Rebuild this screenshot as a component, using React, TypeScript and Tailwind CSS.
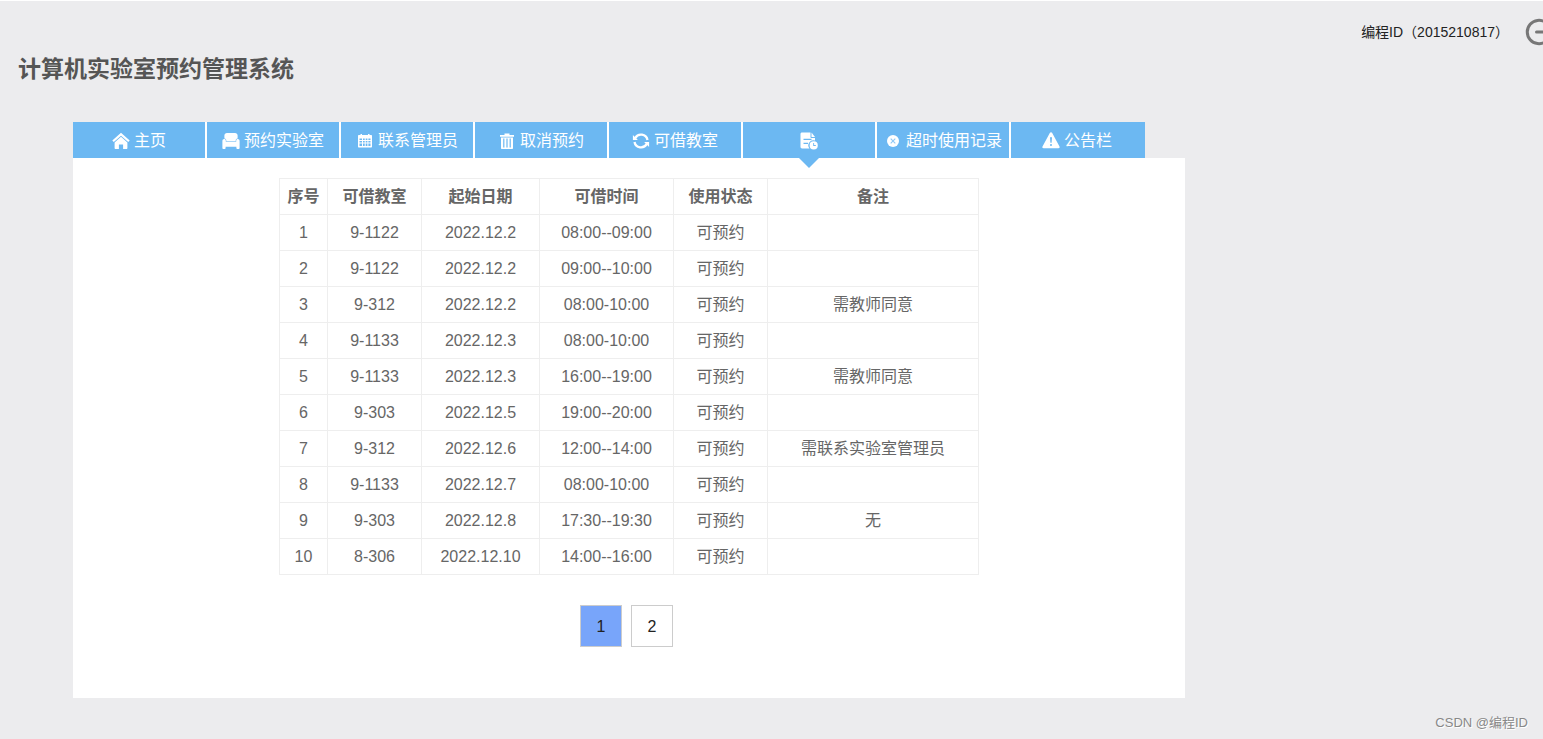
import type { ReactNode } from 'react'
import clsx from 'clsx'

interface NavItem {
  key:     string
  label:   string
  icon:    ReactNode
  active?: boolean
}

interface Booking {
  room:   string
  date:   string
  time:   string
  remark: string
}

const svgProps = {
  width: 18,
  height: 18,
  viewBox: '0 0 18 18',
  fill: 'currentColor',
  'aria-hidden': true,
  className: 'shrink-0',
} as const

function HomeIcon() {
  return (
    <svg {...svgProps}>
      <path d="M9 .7 .3 8.4l1.5 1.7L9 3.8l7.2 6.3 1.5-1.7z" />
      <path d="M9 4.800 2.6 10.4V16c0 .6.4 1 1 1h3.3v-4.6h4.2V17h3.3c.6 0 1-.4 1-1v-5.600z" />
    </svg>
  )
}

function SofaIcon() {
  return (
    <svg {...svgProps}>
      <path d="M5 1h8c1.500 0 2.600 1 2.600 2.300v3.200c-1.200.1-1.900.9-1.900 2v.8H4.300v-.8c0-1.100-.7-1.900-1.900-2V3.300C2.400 2 3.500 1 5 1z" />
      <path d="M2.300 7c1 0 1.500.6 1.500 1.500v1.300h10.400V8.500c0-.9.500-1.500 1.500-1.500 1.200 0 1.900.8 1.900 1.900V16c0 .6-.3.900-.8.900h-1.600c-.5 0-.8-.3-.8-.9v-1.200H3.600V16c0 .6-.3.900-.8.900H1.200c-.5 0-.8-.3-.8-.9V8.900C.4 7.800 1.100 7 2.300 7z" />
    </svg>
  )
}

function CalendarIcon() {
  return (
    <svg {...svgProps}>
      <path
        fillRule="evenodd"
        d="M4.500 2h1.500v1h6V2h1.500v1h1.500c.6 0 1 .4 1 1v10.500c0 .6-.4 1-1 1H3c-.6 0-1-.4-1-1V4c0-.6.4-1 1-1h1.500zM3.500 6.500V8H6V6.500zm3.500 0V8h1.700V6.500zm2.700 0V8h1.700V6.500zm2.700 0V8h2.100V6.500zM3.500 9v1.500H6V9zM7 9v1.500h1.700V9zm2.700 0v1.500h1.700V9zm2.700 0v1.500h2.100V9zm-8.900 2.500V14H6v-2.500zm3.500 0V14h1.700v-2.500zm2.700 0V14h1.700v-2.500zm2.700 0V14h2.100v-2.500z"
      />
    </svg>
  )
}

function TrashIcon() {
  return (
    <svg {...svgProps}>
      <path
        fillRule="evenodd"
        d="M6.500 1.500h5V3H16v1.700H2V3h4.500zM3 5.400h12V16c0 .6-.4 1-1 1H4c-.6 0-1-.4-1-1zm2.200 1v9.200h1.200V6.400zm3.200 0v9.200h1.200V6.400zm3.200 0v9.200h1.200V6.400z"
      />
    </svg>
  )
}

function RefreshIcon() {
  return (
    <svg {...svgProps} fill="none" stroke="currentColor" strokeWidth="2.300">
      <path d="M3.200 6.100A6.600 6.600 0 0 1 15.500 8M14.800 11.900A6.600 6.600 0 0 1 2.500 10" />
      <path d="M.9 3V8H5.900zM17.100 15v-5h-5z" fill="currentColor" stroke="none" />
    </svg>
  )
}

function RecordIcon() {
  return (
    <svg {...svgProps}>
      <path
        fillRule="evenodd"
        d="M2 .5h8.500v4.700c0 .5.300.8.800.8H15v2.600a5 5 0 0 0-5.500 7.900H2c-.8 0-1.500-.6-1.500-1.400V1.900C.5 1.100 1.200.5 2 .5zM3.500 6.700v1.300h8V6.700zm0 4v1.300h4.500v-1.300z"
      />
      <path d="M11.500.6 15 4.900h-3.500z" />
      <path
        fillRule="evenodd"
        d="M13.700 9.300a4.100 4.100 0 1 1 0 8.200 4.100 4.100 0 0 1 0-8.200zm-.5 1.800v2.900h2.600v-.9h-1.700v-2z"
      />
    </svg>
  )
}

function TimeoutIcon() {
  return (
    <svg {...svgProps}>
      <circle cx="9" cy="9" r="6" />
      <path d="m6.700 6.700 4.600 4.600m0-4.600-4.600 4.600" stroke="#8fc8f5" strokeWidth="1.100" />
    </svg>
  )
}

function WarningIcon() {
  return (
    <svg {...svgProps}>
      <path
        fillRule="evenodd"
        d="M7.800.9c.5-.8 1.900-.8 2.400 0l7.300 13.600c.5.9-.1 1.700-1.100 1.700H1.600c-1 0-1.600-.8-1.100-1.700zM8 5.200l.4 5.600h1.200l.4-5.600zm1 6.700a1 1 0 1 0 0 2 1 1 0 0 0 0-2z"
      />
    </svg>
  )
}

const NAV_ITEMS: NavItem[] = [
  { key: 'home',    label: '主页',         icon: <HomeIcon /> },
  { key: 'book',    label: '预约实验室',   icon: <SofaIcon /> },
  { key: 'contact', label: '联系管理员',   icon: <CalendarIcon /> },
  { key: 'cancel',  label: '取消预约',     icon: <TrashIcon /> },
  { key: 'rooms',   label: '可借教室',     icon: <RefreshIcon /> },
  { key: 'records', label: '',             icon: <RecordIcon />, active: true },
  { key: 'timeout', label: '超时使用记录', icon: <TimeoutIcon /> },
  { key: 'notice',  label: '公告栏',       icon: <WarningIcon /> },
]

const COLUMNS = [
  { title: '序号',     width: 'w-[48px]' },
  { title: '可借教室', width: 'w-[94px]' },
  { title: '起始日期', width: 'w-[118px]' },
  { title: '可借时间', width: 'w-[134px]' },
  { title: '使用状态', width: 'w-[94px]' },
  { title: '备注',     width: '' },
]

const BOOKINGS: Booking[] = [
  { room: '9-1122', date: '2022.12.2',  time: '08:00--09:00', remark: '' },
  { room: '9-1122', date: '2022.12.2',  time: '09:00--10:00', remark: '' },
  { room: '9-312',  date: '2022.12.2',  time: '08:00-10:00',  remark: '需教师同意' },
  { room: '9-1133', date: '2022.12.3',  time: '08:00-10:00',  remark: '' },
  { room: '9-1133', date: '2022.12.3',  time: '16:00--19:00', remark: '需教师同意' },
  { room: '9-303',  date: '2022.12.5',  time: '19:00--20:00', remark: '' },
  { room: '9-312',  date: '2022.12.6',  time: '12:00--14:00', remark: '需联系实验室管理员' },
  { room: '9-1133', date: '2022.12.7',  time: '08:00-10:00',  remark: '' },
  { room: '9-303',  date: '2022.12.8',  time: '17:30--19:30', remark: '无' },
  { room: '8-306',  date: '2022.12.10', time: '14:00--16:00', remark: '' },
]

function NavTab({ item }: { item: NavItem }) {
  return (
    <li className="w-[134px] border-r-2 border-white last:border-[#6cb8f2]">
      <a
        href={`#${item.key}`}
        aria-label={item.label ? undefined : '记录'}
        aria-current={item.active ? 'page' : undefined}
        className="relative flex h-9 items-center justify-center gap-1 whitespace-nowrap bg-[#6cb8f2] pt-0.5 text-white"
      >
        {item.icon}
        {item.label}
        {item.active && (
          <svg
            width="20"
            height="10"
            viewBox="0 0 20 10"
            aria-hidden="true"
            className="absolute left-1/2 top-full -translate-x-1/2"
          >
            <path d="M0 0h20L10 10z" fill="#6cb8f2" />
          </svg>
        )}
      </a>
    </li>
  )
}

function BookingTable() {
  return (
    <table className="mx-auto w-[700px] table-fixed border-collapse text-center text-[#666]">
      <thead>
        <tr className="h-9">
          {COLUMNS.map((col) => (
            <th key={col.title} scope="col" className={clsx('border border-[#eee] p-0 font-bold', col.width)}>
              {col.title}
            </th>
          ))}
        </tr>
      </thead>
      <tbody>
        {BOOKINGS.map((row, i) => (
          <tr key={i} className="h-9">
            <td className="border border-[#eee] p-0">{i + 1}</td>
            <td className="border border-[#eee] p-0">{row.room}</td>
            <td className="border border-[#eee] p-0">{row.date}</td>
            <td className="border border-[#eee] p-0">{row.time}</td>
            <td className="border border-[#eee] p-0">可预约</td>
            <td className="border border-[#eee] p-0">{row.remark}</td>
          </tr>
        ))}
      </tbody>
    </table>
  )
}

export default function App() {
  return (
    <div className="relative min-h-screen border-t border-white bg-[#ececee] pb-10 font-['Liberation_Sans','Noto_Sans_CJK_SC',sans-serif] text-base">
      {/* Header */}
      <header className="overflow-hidden">
        <div className="-mr-2.5 flex h-[45px] items-end justify-end gap-4">
          <span className="pb-1 text-sm text-[#222]">编程ID（2015210817）</span>
          <button type="button" aria-label="退出" className="text-[#777]">
            <svg width="28" height="28" viewBox="0 0 28 28" fill="none" stroke="currentColor" strokeWidth="3" aria-hidden="true">
              <path d="M20.500 4.300a11.700 11.700 0 1 0 0 19.400M11.500 14H26" strokeLinecap="round" />
            </svg>
          </button>
        </div>
        <h1 className="mt-[7px] px-[18px] text-[23px] leading-8 font-bold text-[#555]">计算机实验室预约管理系统</h1>
      </header>

      {/* Tabs and content */}
      <main className="mt-[37px] mr-[358px] ml-[73px]">
        <nav aria-label="主导航">
          <ul className="flex">
            {NAV_ITEMS.map((item) => (
              <NavTab key={item.key} item={item} />
            ))}
          </ul>
        </nav>

        <section className="bg-white pt-5 pb-[51px]">
          <BookingTable />

          <div className="mt-[30px] flex justify-center gap-[9px] pr-[5px]">
            <button
              type="button"
              aria-current="page"
              className="size-[42px] border border-[#ccc] bg-[#78a5fa] pt-0.5 text-[#222]"
            >
              1
            </button>
            <button type="button" className="size-[42px] border border-[#ccc] bg-white pt-0.5 text-[#222]">
              2
            </button>
          </div>
        </section>
      </main>

      <p className="absolute right-[15px] bottom-1.5 text-[13px] leading-5 text-[#888] [text-shadow:1px_1px_0_#fff]">
        CSDN @编程ID
      </p>
    </div>
  )
}
